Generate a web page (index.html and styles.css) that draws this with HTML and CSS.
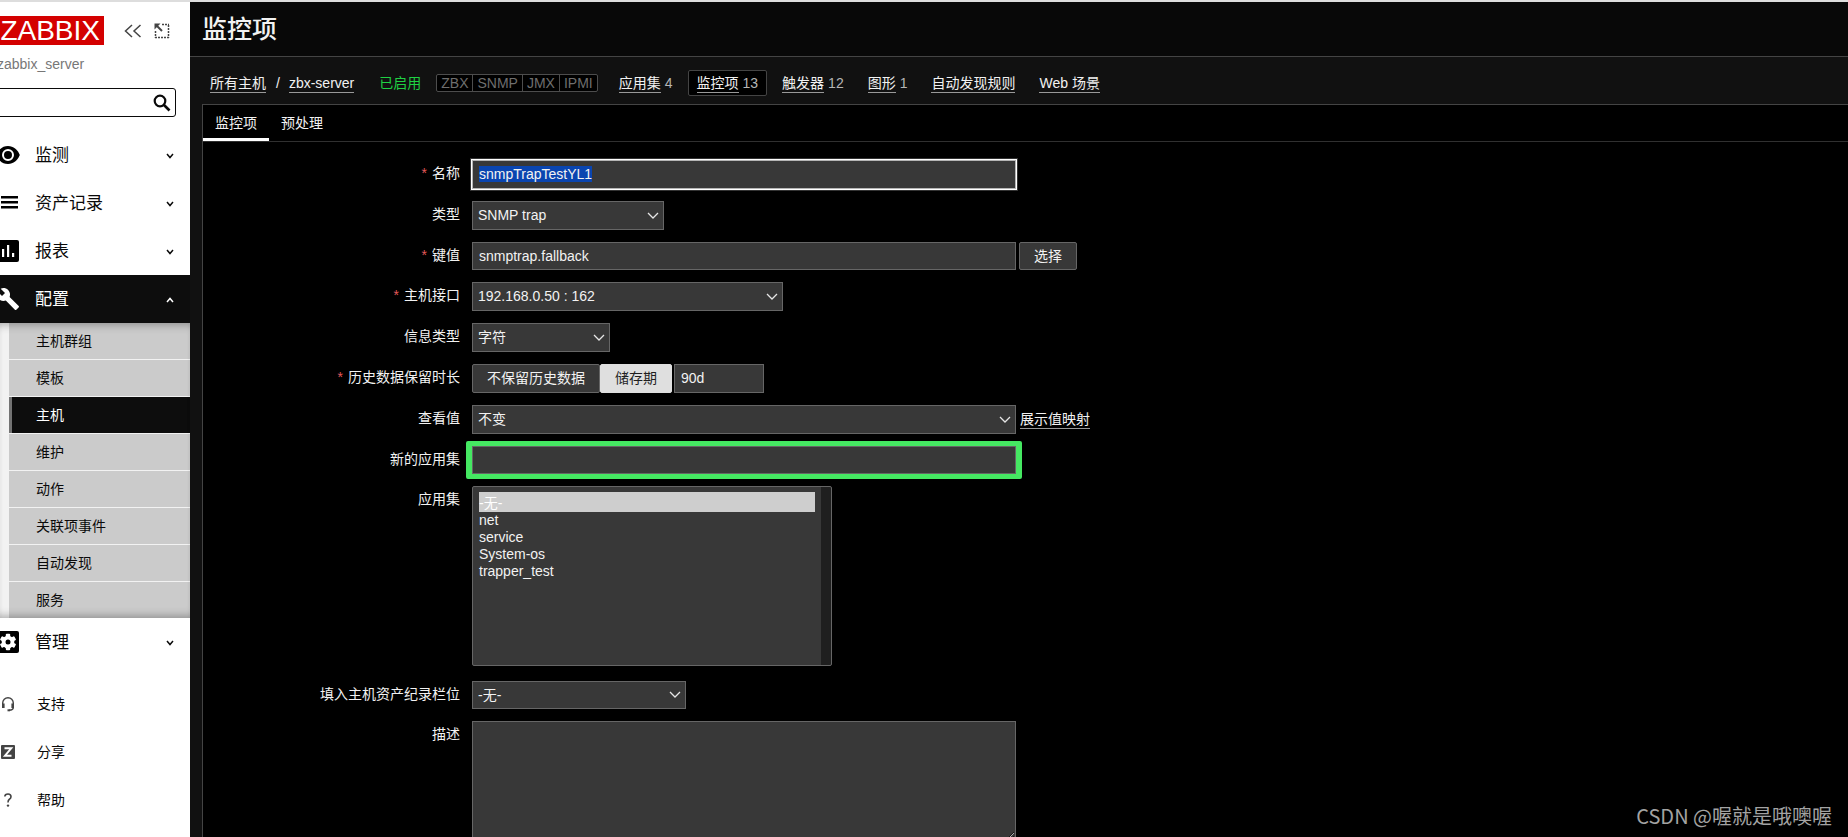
FILE: index.html
```html
<!DOCTYPE html>
<html lang="zh-CN">
<head>
<meta charset="utf-8">
<title>监控项</title>
<link rel="stylesheet" href="styles.css">
</head>
<body>
<div class="layout">
  <aside class="sidebar">
    <div class="sidebar-head">
      <a class="logo" href="#">ZABBIX</a>
      <button class="icon-btn" type="button" aria-label="收起">
        <svg width="18" height="14" viewBox="0 0 18 14" fill="none" stroke="#444" stroke-width="1.5"><path d="M8 1L1.500 7L8 13M16.500 1L10 7L16.500 13"/></svg>
      </button>
      <button class="icon-btn" type="button" aria-label="隐藏菜单">
        <svg width="16" height="16" viewBox="0 0 16 16" fill="none" stroke="#444"><path d="M8 1.500H15" stroke-width="1.500" stroke-dasharray="2 1"/><path d="M14.500 2V15M1.500 8V15M1 14.500H15" stroke-width="1.500" stroke-dasharray="2 1"/><path d="M3 3L8 8" stroke-width="2"/><path d="M0.500 0.500H6.500L0.500 6.500Z" fill="#444" stroke="none"/></svg>
      </button>
    </div>
    <div class="server">zabbix_server</div>
    <form class="search">
      <input class="search-input" type="text" aria-label="搜索">
      <button class="search-btn" type="submit" aria-label="搜索">
        <svg width="18" height="18" viewBox="0 0 18 18" fill="none" stroke="#0a0a0a"><circle cx="7" cy="7" r="5.300" stroke-width="2.200"/><path d="M11 11L16.500 16.500" stroke-width="2.600"/></svg>
      </button>
    </form>
    <nav class="menu">
      <a class="menu-item" href="#">
        <svg class="menu-icon" width="24" height="24" viewBox="0 0 24 24"><path d="M12 3C6.500 3 2.500 6.500 .8 12C2.500 17.500 6.500 21 12 21S21.500 17.500 23.800 12C21.500 6.500 17.500 3 12 3Z"/><circle cx="12" cy="12" r="5" fill="#000" stroke="#fff" stroke-width="2"/></svg>
        <span class="menu-text">监测</span>
        <svg class="chev" width="8" height="6" viewBox="0 0 8 6"><path d="M1 1L4 4.500L7 1"/></svg>
      </a>
      <a class="menu-item" href="#">
        <svg class="menu-icon" width="24" height="24" viewBox="0 0 24 24"><path d="M5 5H22V7.600H5ZM5 10H22V12.600H5ZM5 15H22V17.600H5Z"/></svg>
        <span class="menu-text">资产记录</span>
        <svg class="chev" width="8" height="6" viewBox="0 0 8 6"><path d="M1 1L4 4.500L7 1"/></svg>
      </a>
      <a class="menu-item" href="#">
        <svg class="menu-icon" width="24" height="24" viewBox="0 0 24 24"><rect x="1" y="1" width="22" height="22" rx="2"/><path d="M6 10H8.200V18H6ZM11 6H13.200V18H11ZM16 14H18.200V18H16Z" fill="#fff"/></svg>
        <span class="menu-text">报表</span>
        <svg class="chev" width="8" height="6" viewBox="0 0 8 6"><path d="M1 1L4 4.500L7 1"/></svg>
      </a>
      <a class="menu-item menu-item-open" href="#">
        <svg class="menu-icon" width="24" height="24" viewBox="0 0 24 24"><path d="M22.700 19L13.600 9.900C14.500 7.600 14 4.900 12.100 3C10.100 1 7.100 .6 4.700 1.700L9 6L6 9L1.600 4.700C.4 7.100 .9 10.100 2.900 12.100C4.800 14 7.500 14.500 9.800 13.600L18.900 22.700C19.300 23.100 19.900 23.100 20.300 22.700L22.600 20.400C23.100 20 23.100 19.300 22.700 19Z" fill="#fff"/></svg>
        <span class="menu-text">配置</span>
        <svg class="chev" width="8" height="6" viewBox="0 0 8 6"><path d="M1 5L4 1.500L7 5"/></svg>
      </a>
      <div class="submenu">
        <a class="sub-item" href="#">主机群组</a>
        <a class="sub-item" href="#">模板</a>
        <a class="sub-item sub-item-active" href="#">主机</a>
        <a class="sub-item" href="#">维护</a>
        <a class="sub-item" href="#">动作</a>
        <a class="sub-item" href="#">关联项事件</a>
        <a class="sub-item" href="#">自动发现</a>
        <a class="sub-item" href="#">服务</a>
      </div>
      <a class="menu-item" href="#">
        <svg class="menu-icon" width="24" height="24" viewBox="0 0 24 24"><rect x="1" y="1" width="22" height="22" rx="2"/><g fill="#fff"><circle cx="12" cy="12" r="6.300"/><rect x="9.800" y="3.800" width="4.400" height="16.400" rx="1"/><rect x="9.800" y="3.800" width="4.400" height="16.400" rx="1" transform="rotate(60 12 12)"/><rect x="9.800" y="3.800" width="4.400" height="16.400" rx="1" transform="rotate(120 12 12)"/></g><circle cx="12" cy="12" r="2.500"/></svg>
        <span class="menu-text">管理</span>
        <svg class="chev" width="8" height="6" viewBox="0 0 8 6"><path d="M1 1L4 4.500L7 1"/></svg>
      </a>
    </nav>
    <nav class="support">
      <a class="support-item" href="#">
        <svg width="16" height="16" viewBox="0 0 16 16" fill="none" stroke="#444" stroke-width="1.400"><path d="M2.700 9V7A5.300 5.300 0 0 1 13.300 7V11.500Q13.300 14 9 14.300"/><path d="M3.300 7.500V12M12.700 7.500V12" stroke-width="2.600"/><path d="M7.500 14.300H10" stroke-width="2"/></svg>
        <span>支持</span>
      </a>
      <a class="support-item" href="#">
        <svg width="16" height="16" viewBox="0 0 16 16"><rect x="1" y="1" width="14" height="14" rx="1" fill="#444"/><path d="M4.500 4.300H11.200L5 11.700H11.500" fill="none" stroke="#fff" stroke-width="2"/></svg>
        <span>分享</span>
      </a>
      <a class="support-item" href="#">
        <svg width="16" height="16" viewBox="0 0 16 16"><path d="M4.800 4.500Q5 2 8 2Q11 2 11 4.800Q11 6.300 9.400 7.300Q8 8.200 8 10.500" fill="none" stroke="#444" stroke-width="1.600"/><circle cx="8" cy="13.600" r="1.200" fill="#444"/></svg>
        <span>帮助</span>
      </a>
    </nav>
  </aside>

  <main class="content">
    <header class="page-head"><h1 class="page-title">监控项</h1></header>
    <nav class="host-nav">
      <a class="link" href="#">所有主机</a>
      <span class="slash">/</span>
      <a class="link" href="#">zbx-server</a>
      <span class="enabled">已启用</span>
      <span class="badges"><span class="badge">ZBX</span><span class="badge">SNMP</span><span class="badge">JMX</span><span class="badge">IPMI</span></span>
      <ul class="host-links">
        <li class="host-link"><a class="link" href="#">应用集</a><span class="count">4</span></li>
        <li class="host-link host-link-active"><a class="link" href="#">监控项</a><span class="count">13</span></li>
        <li class="host-link"><a class="link" href="#">触发器</a><span class="count">12</span></li>
        <li class="host-link"><a class="link" href="#">图形</a><span class="count">1</span></li>
        <li class="host-link"><a class="link" href="#">自动发现规则</a></li>
        <li class="host-link"><a class="link" href="#">Web 场景</a></li>
      </ul>
    </nav>

    <section class="panel">
      <div class="tabs">
        <a class="tab tab-active" href="#">监控项</a>
        <a class="tab" href="#">预处理</a>
      </div>
      <form class="form">
        <label class="label required" for="name">名称</label>
        <div class="field"><input class="input wide focused" id="name" type="text" value="snmpTrapTestYL1"></div>

        <label class="label" for="type">类型</label>
        <div class="field"><select class="select w-type" id="type"><option>SNMP trap</option></select></div>

        <label class="label required" for="key">键值</label>
        <div class="field"><input class="input wide" id="key" type="text" value="snmptrap.fallback"><button class="btn" type="button">选择</button></div>

        <label class="label required" for="iface">主机接口</label>
        <div class="field"><select class="select w-iface" id="iface"><option>192.168.0.50 : 162</option></select></div>

        <label class="label" for="info">信息类型</label>
        <div class="field"><select class="select w-info" id="info"><option>字符</option></select></div>

        <label class="label required" for="history">历史数据保留时长</label>
        <div class="field field-tight">
          <div class="segmented">
            <label class="segment"><input class="segment-radio" type="radio" name="mode"><span class="segment-text">不保留历史数据</span></label>
            <label class="segment"><input class="segment-radio" type="radio" name="mode" checked><span class="segment-text">储存期</span></label>
          </div>
          <input class="input tall w-history" id="history" type="text" value="90d">
        </div>

        <label class="label" for="view">查看值</label>
        <div class="field"><select class="select wide" id="view"><option>不变</option></select><a class="link" href="#">展示值映射</a></div>

        <label class="label" for="newapp">新的应用集</label>
        <div class="field"><span class="highlight"><input class="input wide" id="newapp" type="text"></span></div>

        <label class="label" for="apps">应用集</label>
        <div class="field field-list">
          <select class="listbox" id="apps" multiple>
            <option selected>-无-</option>
            <option>net</option>
            <option>service</option>
            <option>System-os</option>
            <option>trapper_test</option>
          </select>
        </div>

        <label class="label" for="inventory">填入主机资产纪录栏位</label>
        <div class="field"><select class="select short w-inventory" id="inventory"><option>-无-</option></select></div>

        <label class="label" for="desc">描述</label>
        <div class="field"><textarea class="textarea wide" id="desc"></textarea></div>
      </form>
    </section>
  </main>
</div>
<div class="watermark">CSDN @喔就是哦噢喔</div>
<script src="app.js"></script>
</body>
</html>
```
FILE: styles.css
```css
* { box-sizing: border-box; }

body {
  margin: 0;
  height: 100vh;
  overflow: hidden;
  background: #111;
  color: #f2f2f2;
  font: 14px/20px "Liberation Sans", "Noto Sans CJK SC", sans-serif;
}

a { color: inherit; text-decoration: none; }
input, select, textarea, button { font: inherit; color: inherit; }

.layout {
  display: flex;
  height: 100%;
  border-top: 2px solid #ddd;
}

/* Sidebar */
.sidebar {
  flex: none;
  width: 190px;
  overflow: hidden;
  background: #fff;
  color: #0a0a0a;
}
.sidebar-head {
  display: flex;
  align-items: center;
  padding-top: 14px;
}
.logo {
  display: flex;
  justify-content: flex-end;
  width: 104px;
  padding-right: 4px;
  margin-right: 20px;
  background: #d40000;
  color: #fff;
  font-size: 28px;
  line-height: 29px;
}
.icon-btn {
  display: flex;
  padding: 0;
  margin-right: 12px;
  border: 0;
  background: none;
}
.server {
  margin: 9px 0 14px -3px;
  color: #777;
}
.search {
  display: flex;
  align-items: center;
  height: 29px;
  margin: 0 14px 14px -10px;
  border: 1px solid #0a0a0a;
  border-radius: 3px;
}
.search-input {
  flex: 1;
  min-width: 0;
  border: 0;
  background: none;
  outline: none;
}
.search-btn {
  display: flex;
  padding: 0;
  margin: 0 4px 0 0;
  border: 0;
  background: none;
}
.menu-item {
  display: flex;
  align-items: center;
  height: 48px;
  padding-right: 16px;
  font-size: 17px;
}
.menu-icon { margin-left: -4px; }
.menu-text { flex: 1; margin: 1px 0 0 15px; }
.chev {
  margin-top: 2px;
  fill: none;
  stroke: currentColor;
  stroke-width: 1.5;
}
.menu-item-open { background: #0d0d0d; color: #fff; }
.submenu {
  display: flex;
  flex-direction: column;
  gap: 1px;
  padding-left: 9px;
  background: #f2f2f2;
  position: relative;
}
.submenu::after {
  content: "";
  position: absolute;
  inset: 0;
  box-shadow: inset 0 8px 8px -6px rgba(0, 0, 0, .3), inset 0 -8px 8px -6px rgba(0, 0, 0, .3);
  pointer-events: none;
}
.sub-item {
  padding: 0 27px;
  background: #cbcbcb;
  line-height: 36px;
}
.sub-item-active {
  padding-left: 24px;
  border-left: 3px solid #737373;
  background: #0d0d0d;
  color: #fff;
}
.menu > .submenu + .menu-item { margin-bottom: 14px; }
.support-item {
  display: flex;
  align-items: center;
  gap: 21px;
  height: 48px;
}

/* Page header */
.content {
  flex: 1;
  min-width: 0;
  display: flex;
  flex-direction: column;
}
.page-head {
  padding: 9px 12px;
  border-bottom: 1px solid #444;
  background: #080808;
}
.page-title {
  margin: 0;
  font-size: 25px;
  font-weight: 500;
  line-height: 36px;
}
.host-nav {
  display: flex;
  align-items: center;
  padding: 13px 20px 8px;
}
.link {
  border-bottom: 1px solid #999;
  line-height: 18px;
}
.slash { margin: 0 9px 0 10px; }
.enabled { margin: 0 15px 0 25px; color: #1fd143; }
.badges {
  display: flex;
  border: 1px solid #4d4d4d;
  border-radius: 2px;
  background: #000;
  color: #6e6e6e;
  line-height: 16px;
}
.badge { padding: 0 4px; }
.badge + .badge { border-left: 1px solid #4d4d4d; }
.host-links {
  display: flex;
  gap: 6px;
  margin: 0 0 0 12px;
  padding: 0;
  list-style: none;
}
.host-link {
  display: flex;
  align-items: center;
  gap: 4px;
  height: 26px;
  padding: 0 8px;
  border: 1px solid transparent;
  border-radius: 2px;
}
.host-link-active { border-color: #444; background: #000; }
.count { color: #b5b5b5; }

/* Form panel */
.panel {
  flex: 1;
  min-height: 0;
  margin-left: 12px;
  border: solid #444;
  border-width: 1px 0 0 1px;
  background: #000;
}
.tabs {
  display: flex;
  border-bottom: 1px solid #303030;
}
.tab {
  padding: 3px 12px 0;
  border-bottom: 3px solid transparent;
  line-height: 30px;
}
.tab-active { border-color: #fff; }
.form {
  display: grid;
  grid-template-columns: 257px 1fr;
  gap: 12px;
  padding-top: 18px;
}
.label {
  line-height: 26px;
  height: 28px;
  text-align: right;
}
.required::before {
  content: "*";
  margin-right: 5px;
  color: #e45959;
}
.field {
  display: flex;
  align-items: flex-start;
  gap: 3px;
}
.field > .link { margin: 5px 0 0 1px; }
.field-tight { gap: 2px; }
.field-list { margin-bottom: 3px; }
.input,
.select,
.textarea,
.listbox {
  margin: 0;
  border: 1px solid #666;
  border-radius: 0;
  background-color: #383838;
  outline: none;
}
.input { height: 28px; padding: 0 6px 1px; display: block; }
.tall { height: 29px; }
.wide { width: 544px; }
.w-type { width: 192px; }
.w-iface { width: 311px; }
.w-info { width: 138px; }
.w-history { width: 90px; }
.w-inventory { width: 214px; }
.focused {
  height: 29px;
  padding-bottom: 2px;
  border-color: #b5b5b5;
  box-shadow: 0 0 0 1px #fff, 0 0 0 2px #333;
  caret-color: transparent;
}
.focused::selection { background: #0a45b0; color: #f2f2f2; }
.select {
  height: 29px;
  padding: 0 20px 1px 5px;
  appearance: none;
  background-image: url("data:image/svg+xml,%3Csvg xmlns='http://www.w3.org/2000/svg' width='12' height='8' fill='none' stroke='%23e6e6e6' stroke-width='1.3'%3E%3Cpath d='M1 1L6 6L11 1'/%3E%3C/svg%3E");
  background-repeat: no-repeat;
  background-position: right 4px center;
}
.select.short { height: 28px; }
.btn {
  height: 28px;
  padding: 0 14px;
  border: 1px solid #666;
  border-radius: 2px;
  background: #383838;
}
.segmented { display: flex; }
.segment { position: relative; display: flex; }
.segment-radio {
  position: absolute;
  inset: 0;
  margin: 0;
  opacity: 0;
}
.segment-text {
  padding: 0 14px 1px;
  border: 1px solid #666;
  border-radius: 2px;
  background: #383838;
  line-height: 26px;
}
.segment-radio:checked + .segment-text {
  border-color: #dfdfdf;
  background: #dfdfdf;
  color: #1f1f1f;
}
.highlight { position: relative; }
.highlight::after {
  content: "";
  position: absolute;
  inset: -5px -6px;
  border: solid #45e862;
  border-width: 5px 6px;
  border-radius: 2px;
  pointer-events: none;
}
.listbox {
  width: 360px;
  height: 180px;
  padding: 5px 16px 5px 6px;
  border-radius: 2px;
  overflow: hidden;
  background-image: linear-gradient(#1f1f1f, #1f1f1f);
  background-repeat: no-repeat;
  background-position: right top;
  background-size: 10px 100%;
}
.listbox option {
  min-height: 17px;
  padding: 0;
  line-height: 17px;
}
.listbox option:checked {
  background: #cecece linear-gradient(#cecece, #cecece);
  color: #fff;
  line-height: 19px;
}
.textarea {
  height: 120px;
  padding: 4px 6px;
  resize: vertical;
}

.watermark {
  position: absolute;
  right: 16px;
  bottom: 6px;
  color: #a3a3a3;
  font: 20px/30px "Noto Sans CJK SC", sans-serif;
}
```
FILE: app.js
```js
const nameInput = document.getElementById("name");
nameInput.focus();
nameInput.select();
```
